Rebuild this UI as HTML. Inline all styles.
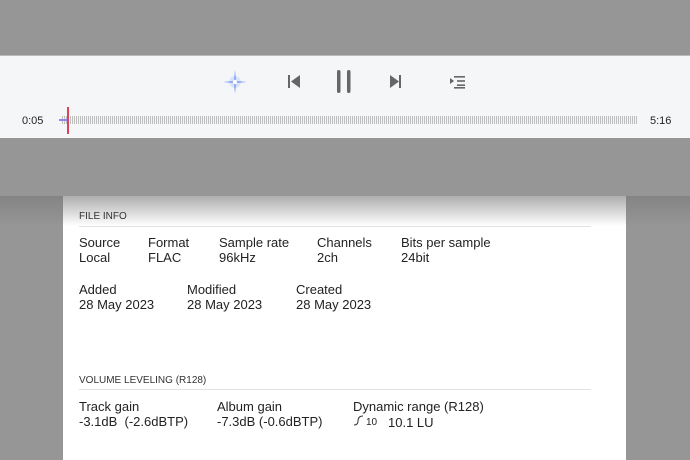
<!DOCTYPE html>
<html><head><style>
body{margin:0;width:690px;height:460px;background:#969696;position:relative;overflow:hidden;font-family:"Liberation Sans",sans-serif;color:#222}
.bar{position:absolute;left:0;top:55px;width:690px;height:82px;background:#f5f6f8;border-top:1px solid #bbb}
.panel{position:absolute;left:63px;top:196px;width:563px;height:264px;background:#fff}
.shade{position:absolute;left:0;top:196px;width:690px;height:30px;background:linear-gradient(rgba(120,120,120,0.6),rgba(150,150,150,0));}
.t{position:absolute;font-size:13px;white-space:nowrap;line-height:15px}
.h{position:absolute;font-size:10px;color:#333}
.ln{position:absolute;left:79px;width:512px;height:1px;background:#e2e2e2}
.wave{position:absolute;left:62px;top:113px;width:575px;height:14px;background:repeating-linear-gradient(90deg,#bdbdbd 0 1px,transparent 1px 2px);-webkit-mask:linear-gradient(transparent 3px,#000 3px 11px,transparent 11px)}
</style></head><body>
<div class="bar">
<svg style="position:absolute;left:222px;top:13px" width="26" height="26" viewBox="0 0 26 26"><circle cx="13" cy="13" r="6" fill="#dbe4fa"/><path d="M13 1 L14.3 11.7 L25 13 L14.3 14.3 L13 25 L11.7 14.3 L1 13 L11.7 11.7Z" fill="#8eaaf0"/><circle cx="13" cy="13" r="2.2" fill="#fff"/></svg>
<svg style="position:absolute;left:286px;top:18px" width="16" height="16"><rect x="2" y="1" width="2" height="13" fill="#666"/><path d="M14 1 L5 7.5 L14 14Z" fill="#666"/></svg>
<svg style="position:absolute;left:335px;top:13px" width="20" height="26"><rect x="2" y="1" width="3.5" height="23" rx="1.75" fill="#666"/><rect x="12" y="1" width="3.5" height="23" rx="1.75" fill="#666"/></svg>
<svg style="position:absolute;left:388px;top:18px" width="16" height="16"><path d="M2 1 L11 7.5 L2 14Z" fill="#666"/><rect x="11" y="1" width="2" height="13" fill="#666"/></svg>
<svg style="position:absolute;left:449px;top:19px" width="18" height="14"><path d="M1 3 L5 6 L1 9Z" fill="#666"/><rect x="5" y="1" width="11" height="1.6" fill="#666"/><rect x="8" y="5.2" width="8" height="1.6" fill="#666"/><rect x="8" y="9.4" width="8" height="1.6" fill="#666"/><rect x="5" y="12" width="11" height="1.6" fill="#666"/></svg>
<div class="t" style="left:22px;top:58px;font-size:11px">0:05</div>
<div class="t" style="left:650px;top:58px;font-size:11px">5:16</div>
</div>
<div class="wave"></div>
<div style="position:absolute;left:59px;top:119px;width:8px;height:2px;background:#8a8cf0"></div>
<div style="position:absolute;left:67px;top:107px;width:1.5px;height:27px;background:#e0405a"></div>
<div class="panel"></div>
<div class="shade"></div>
<div class="h" style="left:79px;top:211px">FILE INFO</div>
<div class="ln" style="top:226px"></div>
<div class="t" style="left:79px;top:235px">Source<br>Local</div>
<div class="t" style="left:148px;top:235px">Format<br>FLAC</div>
<div class="t" style="left:219px;top:235px">Sample rate<br>96kHz</div>
<div class="t" style="left:317px;top:235px">Channels<br>2ch</div>
<div class="t" style="left:401px;top:235px">Bits per sample<br>24bit</div>
<div class="t" style="left:79px;top:282px">Added<br>28 May 2023</div>
<div class="t" style="left:187px;top:282px">Modified<br>28 May 2023</div>
<div class="t" style="left:296px;top:282px">Created<br>28 May 2023</div>
<div class="h" style="left:79px;top:375px">VOLUME LEVELING (R128)</div>
<div class="ln" style="top:389px"></div>
<div class="t" style="left:79px;top:399px">Track gain<br>-3.1dB&nbsp; (-2.6dBTP)</div>
<div class="t" style="left:217px;top:399px">Album gain<br>-7.3dB (-0.6dBTP)</div>
<div class="t" style="left:353px;top:399px">Dynamic range (R128)</div>
<svg style="position:absolute;left:353px;top:415px" width="12" height="12"><path d="M1 10 Q5 10 5 6 Q5 1 10 1" fill="none" stroke="#333" stroke-width="1"/></svg>
<div class="t" style="left:366px;top:415px;font-size:10px">10</div>
<div class="t" style="left:388px;top:415px">10.1 LU</div>
</body></html>
